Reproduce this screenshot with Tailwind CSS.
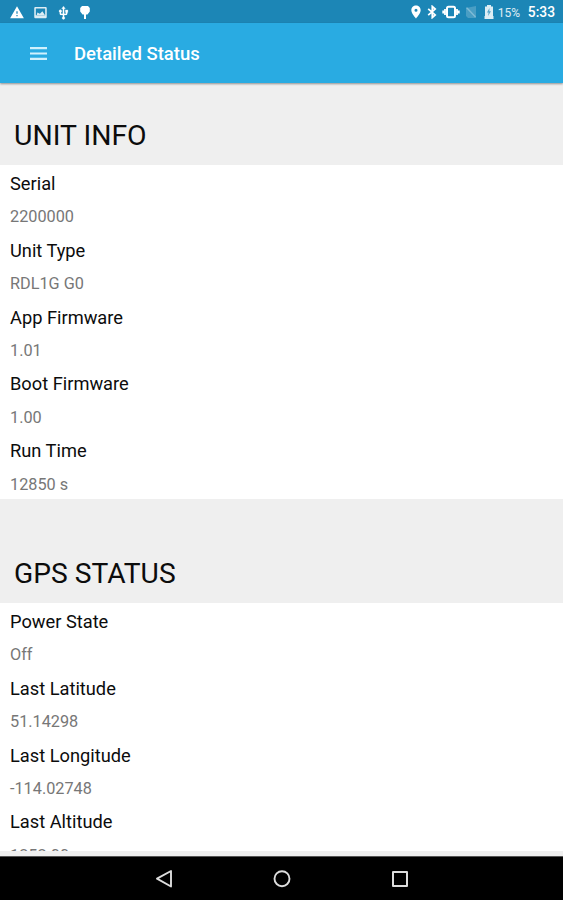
<!DOCTYPE html>
<html lang="en">
  <head>
    <meta charset="UTF-8" />
    <meta name="viewport" content="width=device-width, initial-scale=1.0"/>
    <title>Detailed Status</title>
    <script src="https://cdn.jsdelivr.net/npm/@tailwindcss/browser@4"></script>
  </head>

  <body class="font-[Roboto,sans-serif] bg-[#efefef] text-[#0c0c0c]">
    <div class="h-[900px] flex flex-col overflow-hidden">
      <!-- Status bar -->
      <div class="h-[23px] shrink-0 bg-[#1c86b6] flex items-center justify-between pl-[9px] pr-[8px] pt-[2px] text-white">
        <div class="flex items-center gap-[8px]">
          <svg class="w-[16px] h-[15px]" viewBox="0 0 24 24" fill="currentColor"><path d="M1 21h22L12 2 1 21zm12-3h-2v-2h2v2zm0-4h-2v-4h2v4z"/></svg>
          <svg class="w-[15px] h-[15px] opacity-85" viewBox="0 0 24 24" fill="currentColor"><path d="M22 19V5c0-1.100-.9-2-2-2H4c-1.100 0-2 .9-2 2v14c0 1.100.9 2 2 2h16c1.100 0 2-.9 2-2zM4.500 5.500h15v11h-15zM7 12l4 2 4-4 4 6H6z"/></svg>
          <svg class="w-[15px] h-[16px]" viewBox="0 0 24 24" fill="currentColor" stroke="currentColor" stroke-width=".4"><path d="M15 7v4h1v2h-3V5h2l-3-4-3 4h2v8H8v-2.070c.7-.37 1.200-1.080 1.200-1.930 0-1.210-.99-2.200-2.200-2.200S4.800 7.790 4.800 9c0 .85.5 1.560 1.200 1.930V13c0 1.110.89 2 2 2h3v3.050c-.71.37-1.200 1.100-1.200 1.950 0 1.220.99 2.200 2.200 2.200s2.200-.98 2.200-2.200c0-.85-.49-1.580-1.200-1.950V15h3c1.110 0 2-.89 2-2v-2h1V7h-4z"/></svg>
          <svg class="w-[12px] h-[15px]" viewBox="0 0 12 15" fill="currentColor"><path d="M3 1h6l1.800 2v3.500L8.500 9.500H7V14H5V9.500H3.500L1.200 6.500V3z"/></svg>
        </div>
        <div class="flex items-center">
          <svg class="w-[14px] h-[14px]" viewBox="0 0 24 24" fill="currentColor"><path d="M12 1C7.600 1 4 4.600 4 9c0 5.800 8 14 8 14s8-8.200 8-14c0-4.400-3.600-8-8-8zm0 10.500a2.600 2.600 0 1 1 0-5.200 2.600 2.600 0 0 1 0 5.200z"/></svg>
          <svg class="w-[14px] h-[14px] ml-[2px]" viewBox="0 0 24 24" fill="none" stroke="currentColor" stroke-width="3"><path d="M5.500 6.500l12 10.500-5 4.500v-19l5 4.500L5.500 17.500"/></svg>
          <svg class="w-[18px] h-[14px] ml-[3px]" viewBox="0 0 18 14" fill="none" stroke="currentColor"><rect x="5" y="1.700" width="8" height="10.600" rx="1.500" stroke-width="2"/><path d="M3 4v6M15 4v6M1.200 5.500v3M16.800 5.500v3" stroke-width="1.800"/></svg>
          <svg class="w-[12px] h-[12px] ml-[5px]" viewBox="0 0 12 12"><path d="M11 0v12H3L1 10V2z" fill="#fff" fill-opacity=".2"/><path d="M1.500 1.500l9 9.500" stroke="#fff" stroke-opacity=".3" stroke-width="1.400"/></svg>
          <svg class="w-[10px] h-[14px] ml-[7px]" viewBox="0 0 10 14"><path d="M3 0h4v1.500h2V11h.5v3h-9v-3H1V1.500h2z" fill="#fff" fill-opacity=".85"/><path d="M5.500 3L3 7.500h1.600L4 11l3-4.800H5.300z" fill="#1c86b6" fill-opacity=".7"/></svg>
          <span class="ml-[4px] w-[23px] pt-[1px] text-[12px] leading-none text-white/85">15%</span>
          <span class="ml-[7px] pt-[1px] text-[13.800px] leading-none font-medium">5:33</span>
        </div>
      </div>

      <!-- App bar -->
      <div class="relative z-10 h-[60px] shrink-0 bg-[#29abe2] flex items-center pl-[30px] shadow-[0_1px_2px_rgba(0,0,0,0.4)] text-white">
        <svg class="w-[18px] h-[13px]" viewBox="0 0 18 13" fill="#d0f1fd"><path d="M0 0h17v2.200H0zM0 5.400h17v2.200H0zM0 10.800h17V13H0z"/></svg>
        <h1 class="ml-[26px] pt-[3px] text-[18.500px] leading-none font-medium">Detailed Status</h1>
      </div>

      <div class="flex-1 min-h-0 overflow-hidden">
        <!-- Unit info -->
        <h2 class="h-[82px] pl-[14px] pt-[36px] text-[28.400px] leading-[33px]">UNIT INFO</h2>
        <dl class="h-[334px] bg-white pl-[10px] pt-[2px] text-[18.250px] leading-[33.400px] [&>dd]:text-[16.250px] [&>dd]:text-[#777]">
          <dt>Serial</dt>
          <dd>2200000</dd>
          <dt>Unit Type</dt>
          <dd>RDL1G G0</dd>
          <dt>App Firmware</dt>
          <dd>1.01</dd>
          <dt>Boot Firmware</dt>
          <dd>1.00</dd>
          <dt>Run Time</dt>
          <dd>12850 s</dd>
        </dl>

        <!-- GPS status -->
        <h2 class="h-[104px] pl-[14px] pt-[58px] text-[28.200px] leading-[33px]">GPS STATUS</h2>
        <dl class="h-[248px] overflow-hidden bg-white pl-[10px] pt-[2px] text-[18.250px] leading-[33.400px] [&>dd]:text-[16.250px] [&>dd]:text-[#777]">
          <dt>Power State</dt>
          <dd>Off</dd>
          <dt>Last Latitude</dt>
          <dd>51.14298</dd>
          <dt>Last Longitude</dt>
          <dd>-114.02748</dd>
          <dt>Last Altitude</dt>
          <dd>1252.00</dd>
        </dl>
      </div>

      <!-- Navigation bar -->
      <div class="h-[44px] shrink-0 bg-black border-t border-[#555] flex items-center justify-center gap-[100px] text-[#ddd]">
        <svg class="w-[18px] h-[18px]" viewBox="0 0 18 18" fill="none" stroke="currentColor" stroke-width="1.900" stroke-linejoin="round"><path d="M16 1v15.500L2 8.700z"/></svg>
        <svg class="w-[18px] h-[18px]" viewBox="0 0 18 18" fill="none" stroke="currentColor" stroke-width="1.900"><circle cx="9" cy="8.700" r="7.500"/></svg>
        <svg class="w-[18px] h-[18px]" viewBox="0 0 18 18" fill="none" stroke="currentColor" stroke-width="2" stroke-linejoin="round"><rect x="2" y="2" width="14" height="14"/></svg>
      </div>
    </div>
  </body>
</html>
